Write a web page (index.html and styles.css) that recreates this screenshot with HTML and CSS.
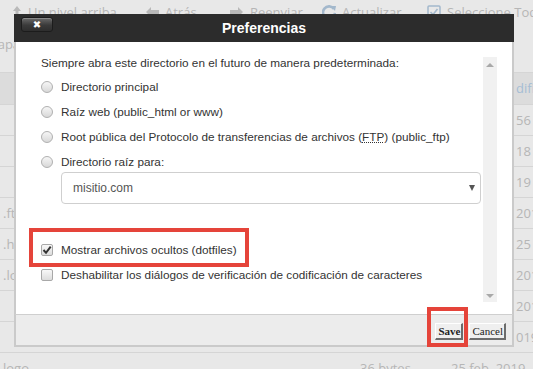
FILE: index.html
```html
<!DOCTYPE html>
<html lang="es">
<head>
  <meta charset="utf-8" />
  <title>Administrador de archivos</title>
  <link rel="stylesheet" href="styles.css">
</head>
<body>

<div class="toolbar">
  <span class="tool"><svg class="tool-ico" width="10" height="14" viewBox="0 0 10 14"><path d="M5 1 L1 6 H3.5 V14 H6.5 V6 H9 Z" fill="#b9b9b9"/></svg>Un nivel arriba</span>
  <span class="tool"><svg class="tool-ico" width="14" height="12" viewBox="0 0 14 12"><path d="M1 6 L6 1 V4 H14 V8 H6 V11 Z" fill="#b9b9b9"/></svg>Atrás</span>
  <span class="tool"><svg class="tool-ico" width="14" height="12" viewBox="0 0 14 12"><path d="M13 6 L8 1 V4 H0 V8 H8 V11 Z" fill="#b9b9b9"/></svg>Reenviar</span>
  <span class="tool"><svg class="tool-ico" width="14" height="14" viewBox="0 0 14 14"><path d="M12 4 A6 6 0 1 0 13 8" fill="none" stroke="#a3b8cc" stroke-width="2.6"/><path d="M9 1 L14 1 L13 6 Z" fill="#a3b8cc"/></svg>Actualizar</span>
  <span class="tool"><svg class="tool-ico" width="14" height="14" viewBox="0 0 14 14"><rect x="1" y="1" width="12" height="12" rx="1" fill="none" stroke="#a3b8cc" stroke-width="1.5"/><path d="M3.5 7 L6 9.5 L10.5 4" fill="none" stroke="#a3b8cc" stroke-width="1.6"/></svg>Seleccione Todo</span>
</div>

<div class="path">Mapa</div>

<div class="files">
  <div class="row head"><span class="name"></span><span></span><span></span><span class="edge">difie</span></div>
  <div class="row"><span class="name"></span><span></span><span></span><span class="edge">56</span></div>
  <div class="row"><span class="name"></span><span></span><span></span><span class="edge">18</span></div>
  <div class="row"><span class="name"></span><span></span><span></span><span class="edge">19</span></div>
  <div class="row"><span class="name">.ftpquota</span><span></span><span></span><span class="edge">2019</span></div>
  <div class="row"><span class="name">.htaccess</span><span></span><span></span><span class="edge">25</span></div>
  <div class="row"><span class="name">.local</span><span></span><span></span><span class="edge">201</span></div>
  <div class="row"><span class="name"></span><span></span><span></span><span class="edge">2019</span></div>
  <div class="row"><span class="name"></span><span></span><span></span><span class="edge">019</span></div>
  <div class="row"><span class="name">logo</span><span>36 bytes</span><span class="date">25 feb. 2019</span><span></span></div>
</div>

<div class="dialog">
  <div class="dialog-title">
    <button class="close" type="button">&#x2716;</button>
    <span class="title-text">Preferencias</span>
  </div>

  <div class="dialog-body">
    <div class="prefs">
      <div class="intro">Siempre abra este directorio en el futuro de manera predeterminada:</div>

      <div class="radios">
        <div class="opt"><span class="radio"></span><span>Directorio principal</span></div>
        <div class="opt"><span class="radio"></span><span>Raíz web (public_html or www)</span></div>
        <div class="opt"><span class="radio"></span><span>Root pública del Protocolo de transferencias de archivos (<abbr>FTP</abbr>) (public_ftp)</span></div>
        <div class="opt"><span class="radio"></span><span>Directorio raíz para:</span></div>
      </div>

      <div class="select"><span>misitio.com</span><span class="caret"></span></div>

      <div class="checks">
        <div class="opt marked">
          <span class="box"><svg width="10" height="10" viewBox="0 0 10 10"><path d="M1.5 5 L4 7.8 L8.7 1.6" fill="none" stroke="#333" stroke-width="2"/></svg></span>
          <span>Mostrar archivos ocultos (dotfiles)</span>
        </div>
        <div class="opt"><span class="box"></span><span>Deshabilitar los diálogos de verificación de codificación de caracteres</span></div>
      </div>
    </div>

    <div class="scroll">
      <span class="arrow up"></span>
      <span class="arrow down"></span>
    </div>
  </div>

  <div class="dialog-foot">
    <span class="marked-btn"><button class="btn save" type="button">Save</button></span>
    <button class="btn" type="button">Cancel</button>
  </div>
</div>

</body>
</html>
```

FILE: styles.css
```css
*,
*::before,
*::after {
  box-sizing: border-box;
}

body {
  margin: 0;
  width: 533px;
  height: 369px;
  overflow: hidden;
  position: relative;
  background-color: #e8e8e8;
  font-family: "Open Sans", sans-serif;
  font-size: 13px;
  color: #b6b6b6;
}

/* page behind the dialog */

.toolbar {
  display: grid;
  grid-template-columns: 133px 85px 92px 105px auto;
  height: 22px;
  padding: 2px 0 0 12px;
  line-height: 20px;
  white-space: nowrap;
}

.tool {
  display: flex;
  align-items: center;
  gap: 6px;
}

.path {
  height: 50px;
  padding-top: 12px;
  margin-left: -14px;
  line-height: 20px;
}

.row {
  display: grid;
  grid-template-columns: 360px 91px 63px 1fr;
  height: 31px;
  line-height: 30px;
  border-bottom: 1px solid #d5d5d5;
  white-space: nowrap;
}

.row.head {
  height: 33px;
  line-height: 31px;
  background-color: #dcdcdc;
  border-top: 1px solid #d5d5d5;
}

.row.head .edge {
  color: #a5bdd4;
}

.name {
  padding-left: 3px;
}

.edge {
  padding-left: 2px;
}

/* dialog */

.dialog {
  position: absolute;
  left: 14px;
  top: 14px;
  width: 500px;
  font-family: "Liberation Sans", Arial, sans-serif;
  font-size: 11.75px;
  color: #333;
}

.dialog-title {
  display: grid;
  grid-template-columns: 1fr auto 1fr;
  height: 28px;
  background-color: #2c2c2c;
}

.close {
  align-self: start;
  justify-self: start;
  margin: 3px 0 0 7px;
  width: 32px;
  height: 15px;
  padding: 0;
  border: 1px solid #1c1c1c;
  border-radius: 3px;
  background: linear-gradient(#6a6a6a, #3a3a3a 55%, #2e2e2e);
  box-shadow: inset 0 1px 0 #888;
  color: #fff;
  font-size: 10px;
  line-height: 13px;
  font-family: "DejaVu Sans", sans-serif;
}

.title-text {
  grid-column: 2;
  line-height: 28px;
  font-size: 14px;
  font-weight: bold;
  color: #fff;
}

.dialog-body {
  display: flex;
  height: 272px;
  background-color: #fff;
  border: solid #cacaca;
  border-width: 0 2px;
}

.prefs {
  flex: 1;
  padding: 11px 0 0 25px;
}

.intro {
  height: 20px;
  line-height: 20px;
  margin-bottom: 4px;
}

.radios,
.checks {
  display: flex;
  flex-direction: column;
  gap: 5px;
}

.checks {
  margin-top: 36px;
}

.opt {
  display: flex;
  align-items: center;
  gap: 8px;
  height: 20px;
  line-height: 20px;
  white-space: nowrap;
}

.opt abbr {
  text-decoration: underline dotted;
}

.radio {
  flex: none;
  width: 12px;
  height: 12px;
  border-radius: 50%;
  border: 1px solid #b0b0b0;
  background: linear-gradient(#f6f6f6, #d8d8d8);
}

.box {
  flex: none;
  display: flex;
  align-items: center;
  justify-content: center;
  width: 12px;
  height: 12px;
  border-radius: 2px;
  border: 1px solid #a8a8a8;
  background: linear-gradient(#f8f8f8, #dcdcdc);
}

.marked {
  position: relative;
}

.marked::after {
  content: "";
  position: absolute;
  left: -12px;
  top: -12px;
  width: 220px;
  height: 39px;
  border: 4px solid #e5443a;
}

.select {
  display: flex;
  align-items: center;
  justify-content: space-between;
  margin-left: 20px;
  width: 420px;
  height: 32px;
  padding: 0 5px 0 11px;
  border: 1px solid #cfcfcf;
  border-radius: 4px;
  font-size: 12px;
  color: #555;
}

.caret {
  border-left: 3.5px solid transparent;
  border-right: 3.5px solid transparent;
  border-top: 6px solid #555;
}

.scroll {
  display: flex;
  flex-direction: column;
  justify-content: space-between;
  align-items: center;
  width: 14px;
  margin: 15px 15px 12px 0;
  padding: 6px 0 4px;
  background-color: #f1f1f1;
}

.arrow {
  border-left: 4px solid transparent;
  border-right: 4px solid transparent;
}

.arrow.up {
  border-bottom: 4px solid #a9a9a9;
}

.arrow.down {
  border-top: 4px solid #a9a9a9;
}

.dialog-foot {
  display: flex;
  justify-content: flex-end;
  align-items: flex-start;
  gap: 6px;
  height: 33px;
  padding: 8px 6px 0 0;
  background-color: #ececec;
  border: 2px solid #cacaca;
  border-top: 1px solid #cfcfcf;
}

.btn {
  height: 17px;
  padding: 0 1px 0 2px;
  border: solid;
  border-width: 1px 2px 2px 1px;
  border-color: #fff #6c6c6c #6c6c6c #fff;
  background-color: #efefef;
  font-family: "Liberation Serif", "Times New Roman", serif;
  font-size: 11px;
  line-height: 14px;
  color: #222;
}

.btn.save {
  font-weight: bold;
}

.marked-btn {
  position: relative;
  display: flex;
}

.marked-btn::after {
  content: "";
  position: absolute;
  left: -8px;
  top: -16px;
  width: 41px;
  height: 40px;
  border: 4px solid #e5443a;
}
```
